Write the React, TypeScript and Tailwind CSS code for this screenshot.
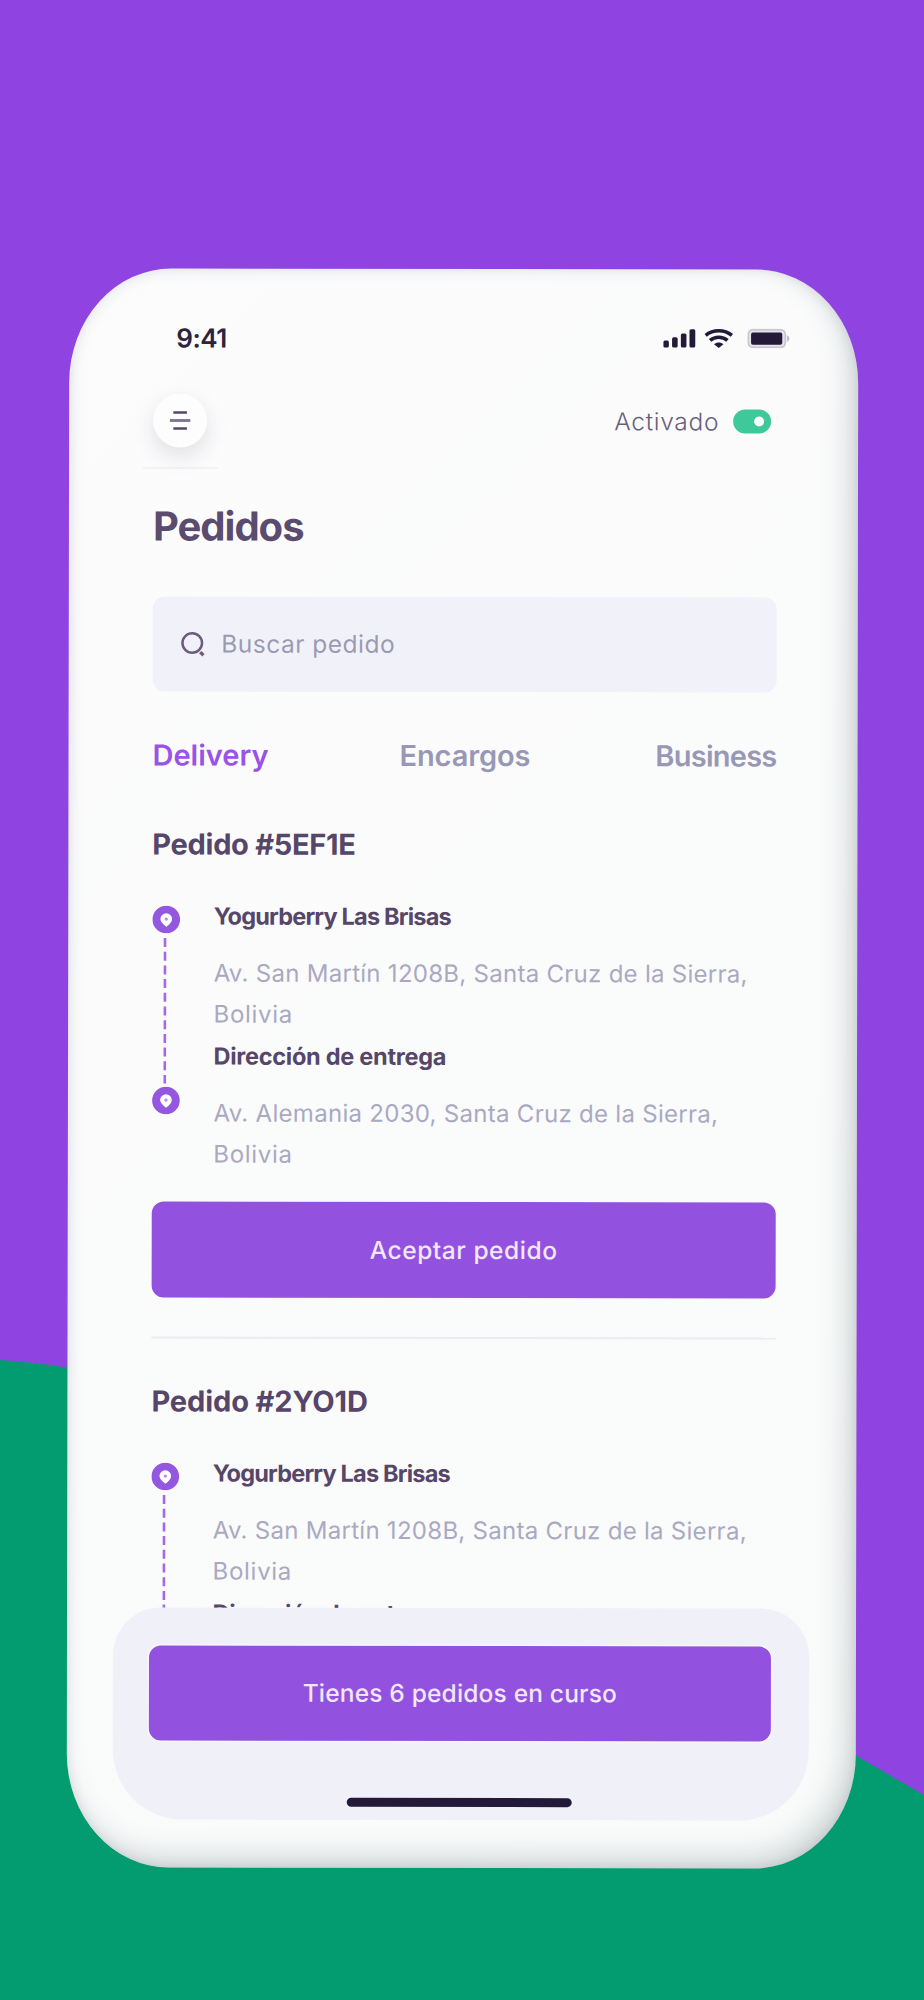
import React from "react";

function Signal() {
  return (
    <svg className="block h-[20px] w-[33px]" viewBox="0 0 33 20" fill="#231a3a">
      <rect x="0" y="12.2" width="5.6" height="7" rx="1.6" />
      <rect x="8.8" y="9" width="5.6" height="10.2" rx="1.6" />
      <rect x="17.6" y="5" width="5.6" height="14.2" rx="1.6" />
      <rect x="26.2" y="0.8" width="5.8" height="18.4" rx="1.6" />
    </svg>
  );
}

function Wifi() {
  return (
    <svg className="block h-[20px] w-[29px]" viewBox="0 0 29 20" fill="none" stroke="#231a3a" strokeWidth="3.6">
      <path d="M1.4 6.9C8.8 .7 20.2 .7 27.6 6.9" />
      <path d="M5.8 11.9c4.900-4.200 12.500-4.200 17.400 0" />
      <path d="M9.800 15.700c2.700-2.300 6.700-2.300 9.400 0L14.500 19.600z" fill="#231a3a" stroke="none" />
    </svg>
  );
}

function Battery() {
  return (
    <svg className="block h-[20px] w-[43px]" viewBox="0 0 43 20">
      <rect x="1" y="1.200" width="37" height="17.600" rx="4.500" fill="#e6e3eb" stroke="#cac6d2" strokeWidth="1.800" />
      <rect x="3.800" y="4" width="31.200" height="12.200" rx="1.800" fill="#231a3a" />
      <path d="M39.600 6.800c3.400 1 3.400 5.600 0 6.600z" fill="#c4bfcd" />
    </svg>
  );
}

function Pin() {
  return (
    <svg className="block size-[28px] shrink-0" viewBox="0 0 28 28">
      <circle cx="14" cy="14" r="13.800" fill="#9457e0" />
      <path d="M14 21.300c-2.800-2.200-5.800-4.800-5.800-7.900a5.800 5.600 0 0 1 11.600 0C19.800 16.500 16.800 19.100 14 21.300z" fill="#fff" />
      <circle cx="14" cy="13.600" r="1.700" fill="#b98bee" />
    </svg>
  );
}

type OrderProps = { code: string; codeClass: string; deliveryAddress?: string };

function Order({ code, codeClass, deliveryAddress }: OrderProps) {
  return (
    <section>
      <h2 className={"h-10 text-[29px] leading-10 font-bold whitespace-nowrap text-[#564669] " + codeClass}>Pedido {code}</h2>
      <div className="mt-[32px] flex">
        <div className="flex w-[61.500px] shrink-0 flex-col pt-[9px]">
          <Pin />
          <svg className="block h-[153px] w-[28px]" viewBox="0 0 28 153">
            <path d="M12.800 4.500V150" stroke="#a468ec" strokeWidth="2.600" strokeDasharray="9 4.700" />
          </svg>
          <Pin />
        </div>
        <div className="whitespace-nowrap">
          <h3 className="h-[40px] text-[23.500px] leading-[40px] font-bold tracking-[-0.800px] text-[#564669]">Yogurberry Las Brisas</h3>
          <p className="mt-[16px] text-[24px] leading-[41px] text-[#a9a9c2]">
            <span className="block tracking-[0.280px]">Av. San Martín 1208B, Santa Cruz de la Sierra,</span>
            <span className="block tracking-[0.700px]">Bolivia</span>
          </p>
          <h3 className="mt-[2px] h-[40px] text-[23.500px] leading-[40px] font-bold tracking-[-0.270px] text-[#564669]">Dirección de entrega</h3>
          {deliveryAddress && (
            <p className="mt-[16px] text-[24px] leading-[41px] text-[#a9a9c2]">
              <span className="block tracking-[0.290px]">{deliveryAddress}</span>
              <span className="block tracking-[0.700px]">Bolivia</span>
            </p>
          )}
        </div>
      </div>
    </section>
  );
}

export default function App() {
  return (
    <div className="relative h-[2000px] w-[924px] overflow-hidden bg-[#8f43e1] font-['Inter','Liberation_Sans',sans-serif]">
      <svg className="absolute inset-0 block" width="924" height="2000" viewBox="0 0 924 2000">
        <path d="M0 1360C300 1378 600 1610 924 1795V2000H0Z" fill="#029c70" />
      </svg>
      <main className="relative mt-[269px] ml-[68px] h-[1599px] w-[789px] rotate-[0.1deg] overflow-hidden rounded-[102px/114px] bg-[linear-gradient(135deg,#fcfcfd,#f9fafa)] shadow-[inset_-10px_-12px_30px_-4px_rgba(60,85,85,0.260),inset_0_0_12px_rgba(100,115,130,0.160)]">
        <div className="h-[1339px] overflow-hidden pr-[81px] pl-[84px]">
          <header className="flex h-[85px] items-end justify-between pt-[55px]">
            <span className="ml-[23px] text-[26px] leading-[30px] font-semibold tracking-[-0.500px] text-[#2c2340]">9:41</span>
            <div className="mr-[-13px] mb-[6px] flex items-center">
              <Signal />
              <span className="ml-[8px]"><Wifi /></span>
              <span className="ml-[14px]"><Battery /></span>
            </div>
          </header>
          <div className="mt-[40px] flex h-[54px] items-center justify-between">
            <button className="flex size-[54px] items-center justify-center rounded-full bg-[#fdfdfe] shadow-[0_9px_22px_rgba(40,40,60,0.130)]">
              <svg className="block h-[20px] w-[22px]" viewBox="0 0 22 20">
                <path d="M4.200 2h13.600M4.200 18h13.600" stroke="#564669" strokeWidth="2.600" />
                <path d="M.8 10h20.400" stroke="#85799a" strokeWidth="3" />
              </svg>
            </button>
            <div className="mr-[6px] flex items-center">
              <span className="text-[24.500px] font-light tracking-[0.700px] text-[#6a5f7b]">Activado</span>
              <span className="ml-[14px] flex h-[24px] w-[38px] items-center justify-end rounded-full bg-[#3ec99b] pr-[7px]">
                <span className="size-[10px] rounded-full bg-white" />
              </span>
            </div>
          </div>
          <div className="mt-[20px] ml-[-10px] h-px w-[75px] bg-[#e9e9ec]" />
          <h1 className="mt-[33px] h-[49px] text-[40px] leading-[49px] font-bold tracking-[-1px] text-[#5b4b6e]">Pedidos</h1>
          <div className="mt-[46px] flex h-[95px] items-center rounded-[12px] bg-[#f1f2f9] pl-[27px]">
            <svg className="block size-[28px]" viewBox="0 0 28 28" fill="none" stroke="#6a5c7c">
              <circle cx="12.500" cy="12.500" r="9.800" strokeWidth="2.500" />
              <path d="M20.500 21.500l3.200 3.200" strokeWidth="3.200" />
            </svg>
            <span className="ml-[13.500px] text-[24.500px] tracking-[0.500px] text-[#9c9ab3]">Buscar pedido</span>
          </div>
          <nav className="mt-[44px] flex h-[40px] justify-between text-[29px] leading-[40px] font-semibold text-[#9898b6]">
            <span className="text-[#9a52e8]">Delivery</span>
            <span className="ml-[6px] tracking-[-0.100px]">Encargos</span>
            <span className="tracking-[-0.750px]">Business</span>
          </nav>
          <div className="mt-[49px] h-[351px]">
            <Order code="#5EF1E" codeClass="tracking-[-0.300px]" deliveryAddress="Av. Alemania 2030, Santa Cruz de la Sierra," />
          </div>
          <button className="mt-[26px] block h-[96px] w-full rounded-[12px] bg-[#9351e0] text-[24.500px] font-medium tracking-[0.550px] text-[#f1e8fc]">Aceptar pedido</button>
          <div className="mt-[39px] mb-[43px] h-[2px] bg-[#ebebf0]" />
          <Order code="#2YO1D" codeClass="tracking-[-0.100px]" />
        </div>
        <footer className="ml-[46px] h-[212px] w-[696px] rounded-t-[48px] rounded-b-[70px] bg-[#f0f0f8] pr-[38px] pl-[36px] pt-[37.500px]">
          <button className="block h-[95px] w-full rounded-[12px] bg-[#9351e0] text-[24.500px] font-medium tracking-[0.180px] text-[#f1e8fc] shadow-[0_0_0_1.500px_rgba(255,255,255,0.500)]">Tienes 6 pedidos en curso</button>
          <div className="mt-[57.500px] ml-[198px] h-[9px] w-[225px] rounded-full bg-[#231a3a]" />
        </footer>
      </main>
    </div>
  );
}
